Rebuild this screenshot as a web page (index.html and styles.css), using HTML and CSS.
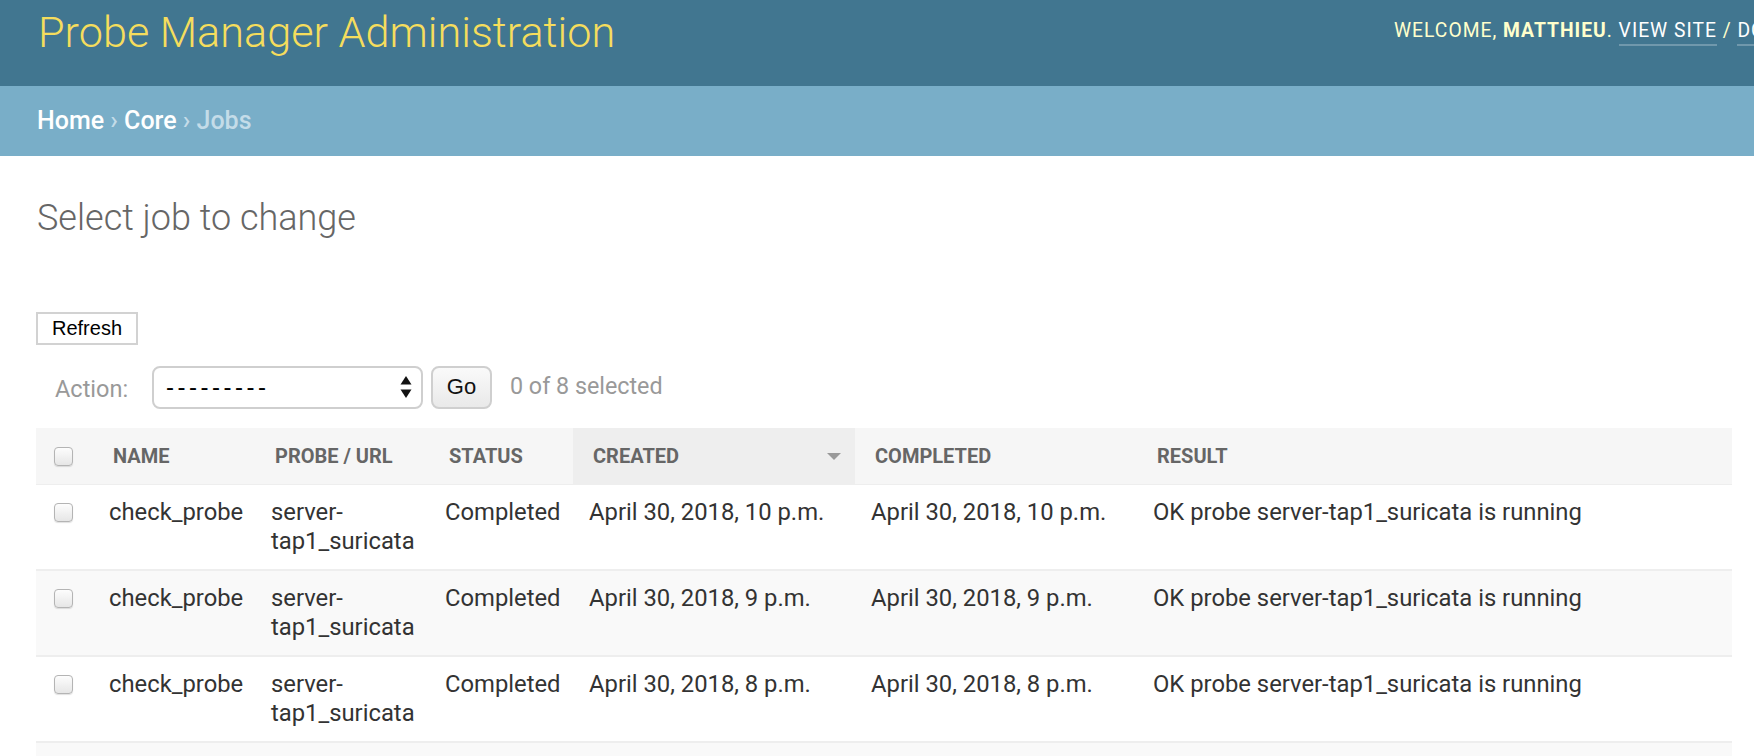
FILE: index.html
```html
<!DOCTYPE html>
<html lang="en">
<head>
<meta charset="utf-8">
<title>Select job to change | Probe Manager Administration</title>
<link rel="stylesheet" href="styles.css">
</head>
<body>
<div class="header">
  <h1 class="site-name">Probe Manager Administration</h1>
  <div class="user-tools">Welcome, <strong>Matthieu</strong>. <a class="ut-link">View site</a> / <a class="ut-link">Documentation</a> / <a class="ut-link">Change password</a> / <a class="ut-link">Log out</a></div>
</div>
<div class="breadcrumbs"><a class="bc-link">Home</a> › <a class="bc-link">Core</a> › Jobs</div>
<div class="content">
  <h1 class="page-title">Select job to change</h1>
  <button class="refresh-btn" type="button">Refresh</button>
  <div class="actions">
    <span class="action-label">Action:</span>
    <div class="fake-select">
      <span class="select-value">---------</span>
      <svg class="select-arrows" width="12" height="24" viewBox="0 0 12 24"><path d="M6 1 L11.5 9.5 L0.5 9.5 Z" fill="#111"/><path d="M6 23 L11.5 14.5 L0.5 14.5 Z" fill="#111"/></svg>
    </div>
    <button class="go-btn" type="button">Go</button>
    <span class="action-counter">0 of 8 selected</span>
  </div>
  <table class="result-list">
    <thead>
      <tr>
        <th class="c-check"><span class="cb"></span></th>
        <th class="c-name">Name</th>
        <th class="c-probe">Probe / URL</th>
        <th class="c-status">Status</th>
        <th class="c-created sorted"><div class="th-inner"><span>Created</span><span class="sort-arrow"></span></div></th>
        <th class="c-completed">Completed</th>
        <th class="c-result">Result</th>
      </tr>
    </thead>
    <tbody>
      <tr class="row1"><td><span class="cb"></span></td><td>check_probe</td><td>server-tap1_suricata</td><td>Completed</td><td>April 30, 2018, 10 p.m.</td><td>April 30, 2018, 10 p.m.</td><td>OK probe server-tap1_suricata is running</td></tr>
      <tr class="row2"><td><span class="cb"></span></td><td>check_probe</td><td>server-tap1_suricata</td><td>Completed</td><td>April 30, 2018, 9 p.m.</td><td>April 30, 2018, 9 p.m.</td><td>OK probe server-tap1_suricata is running</td></tr>
      <tr class="row1"><td><span class="cb"></span></td><td>check_probe</td><td>server-tap1_suricata</td><td>Completed</td><td>April 30, 2018, 8 p.m.</td><td>April 30, 2018, 8 p.m.</td><td>OK probe server-tap1_suricata is running</td></tr>
      <tr class="row2"><td><span class="cb"></span></td><td>check_probe</td><td>server-tap1_suricata</td><td>Completed</td><td>April 30, 2018, 7 p.m.</td><td>April 30, 2018, 7 p.m.</td><td>OK probe server-tap1_suricata is running</td></tr>
      <tr class="row1"><td><span class="cb"></span></td><td>check_probe</td><td>server-tap1_suricata</td><td>Completed</td><td>April 30, 2018, 6 p.m.</td><td>April 30, 2018, 6 p.m.</td><td>OK probe server-tap1_suricata is running</td></tr>
    </tbody>
  </table>
</div>
</body>
</html>
```
FILE: styles.css
```css
html, body {
  margin: 0;
  padding: 0;
  overflow: hidden;
  background: #fff;
}
body {
  font-family: Roboto, "Liberation Sans", sans-serif;
  color: #333;
}
.header {
  height: 86px;
  background: #417690;
  display: grid;
  grid-template-columns: 1356px max-content;
  padding-left: 38px;
  align-items: start;
  overflow: hidden;
  box-sizing: border-box;
}
.site-name {
  margin: 0;
  padding-top: 10px;
  font-weight: 300;
  font-size: 43.2px;
  line-height: 46px;
  color: #f5dd5d;
  white-space: nowrap;
}
.user-tools {
  padding-top: 19px;
  font-size: 19.3px;
  line-height: 24px;
  letter-spacing: 1px;
  text-transform: uppercase;
  color: #ffc;
  white-space: nowrap;
}
.user-tools strong {
  font-weight: 700;
}
.ut-link {
  color: #fff;
  border-bottom: 2px solid rgba(255, 255, 255, 0.25);
  padding-bottom: 2px;
}
.breadcrumbs {
  height: 70px;
  line-height: 70px;
  padding: 0 37px;
  background: #79aec8;
  color: #c4dce8;
  font-size: 25px;
  font-weight: 500;
  white-space: nowrap;
}
.bc-link {
  color: #fff;
}
.content {
  padding: 0 22px 0 36px;
}
.page-title {
  margin: 39px 0 0 1px;
  font-weight: 300;
  font-size: 36px;
  line-height: 46px;
  color: #666;
}
.refresh-btn {
  display: block;
  margin: 71px 0 0 0;
  width: 102px;
  height: 33px;
  padding: 0;
  background: #fff;
  border: 2px solid #d2d2d2;
  font-family: "Liberation Sans", Arial, sans-serif;
  font-size: 20px;
  color: #000;
}
.actions {
  display: flex;
  align-items: center;
  height: 44px;
  margin-top: 20px;
}
.action-label {
  margin-left: 19px;
  width: 97px;
  font-size: 23.5px;
  color: #999;
  padding-top: 4px;
}
.fake-select {
  width: 271px;
  height: 43px;
  box-sizing: border-box;
  border: 2px solid #cfcfcf;
  border-radius: 8px;
  background: #fff;
  display: flex;
  align-items: center;
  justify-content: space-between;
  padding: 0 9px 0 12px;
}
.select-value {
  font-family: "Liberation Sans", Arial, sans-serif;
  font-size: 24px;
  letter-spacing: 3.5px;
  color: #000;
}
.go-btn {
  margin-left: 8px;
  width: 61px;
  height: 43px;
  padding: 0;
  border: 2px solid #cfcfcf;
  border-radius: 8px;
  background: linear-gradient(#fafafa, #e9e9e9);
  font-family: "Liberation Sans", Arial, sans-serif;
  font-size: 22px;
  color: #111;
}
.action-counter {
  margin-left: 18px;
  font-size: 23.3px;
  color: #999;
  padding-bottom: 2px;
}
.result-list {
  margin-top: 19px;
  width: 1696px;
  table-layout: fixed;
  border-collapse: collapse;
}
.result-list th,
.result-list td {
  box-sizing: border-box;
}
.result-list th {
  text-align: left;
  vertical-align: top;
  background: #f6f6f6;
  color: #666;
  font-size: 20px;
  font-weight: 700;
  line-height: 24px;
  text-transform: uppercase;
  padding: 16px 20px;
  border-bottom: 1px solid #eee;
  white-space: nowrap;
}
.result-list th.sorted {
  background: #eee;
  padding-right: 14px;
}
.th-inner {
  display: flex;
  justify-content: space-between;
  align-items: center;
}
.sort-arrow {
  width: 0;
  height: 0;
  border-left: 7px solid transparent;
  border-right: 7px solid transparent;
  border-top: 7px solid #999;
}
.c-check { width: 57px; }
.c-name { width: 162px; }
.c-probe { width: 174px; }
.c-status { width: 144px; }
.c-created { width: 282px; }
.c-completed { width: 282px; }
.result-list th.c-check {
  padding: 19px 16px 0 18px;
}
.result-list td {
  vertical-align: top;
  font-size: 23.8px;
  line-height: 29px;
  padding: 13px 16px 13px;
  border-bottom: 2px solid #eee;
  color: #333;
}
.result-list td:first-child {
  padding: 18px 16px 0 18px;
}
.row1 { background: #fff; }
.row2 { background: #f9f9f9; }
.cb {
  display: block;
  width: 19px;
  height: 19px;
  box-sizing: border-box;
  border: 1px solid #b4b4b4;
  border-radius: 4px;
  background: linear-gradient(#fdfdfd, #e6e6e6);
  box-shadow: 0 1px 1px rgba(0, 0, 0, 0.12);
}
```
